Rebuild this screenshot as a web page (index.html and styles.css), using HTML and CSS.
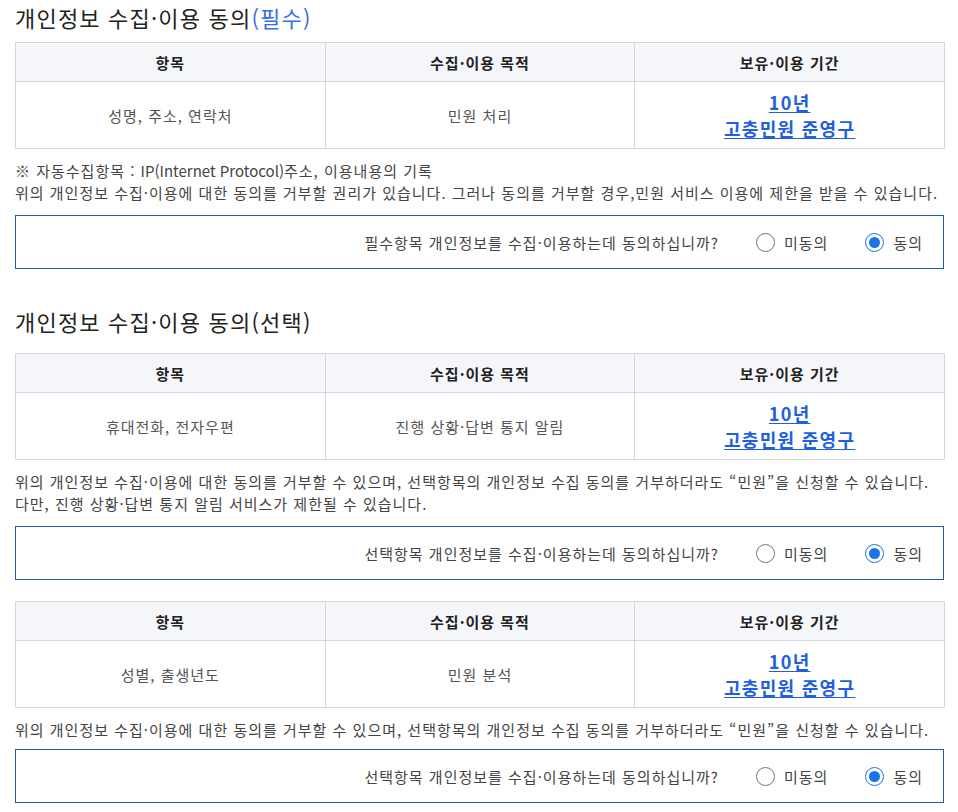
FILE: index.html
```html
<!DOCTYPE html>
<html lang="ko">
<head>
<meta charset="utf-8">
<link rel="stylesheet" href="styles.css">
</head>
<body>
<div class="page">
  <section class="sec sec-first">
    <h2 class="title">개인정보 수집·이용 동의<span class="req">(필수)</span></h2>
    <table class="tbl">
      <thead><tr><th>항목</th><th>수집·이용 목적</th><th>보유·이용 기간</th></tr></thead>
      <tbody><tr><td>성명, 주소, 연락처</td><td>민원 처리</td><td><a class="period" href="#">10년<br>고충민원 준영구</a></td></tr></tbody>
    </table>
    <p class="note">※ 자동수집항목 : <span class="latin">IP(Internet Protocol)</span>주소, 이용내용의 기록<br>위의 개인정보 수집·이용에 대한 동의를 거부할 권리가 있습니다. 그러나 동의를 거부할 경우,민원 서비스 이용에 제한을 받을 수 있습니다.</p>
    <div class="agree">
      <span class="q">필수항목 개인정보를 수집·이용하는데 동의하십니까?</span>
      <label class="opt"><input type="radio" name="a1"><span>미동의</span></label>
      <label class="opt"><input type="radio" name="a1" checked><span>동의</span></label>
    </div>
  </section>

  <section class="sec sec-second">
    <h2 class="title">개인정보 수집·이용 동의(선택)</h2>
    <table class="tbl">
      <thead><tr><th>항목</th><th>수집·이용 목적</th><th>보유·이용 기간</th></tr></thead>
      <tbody><tr><td>휴대전화, 전자우편</td><td>진행 상황·답변 통지 알림</td><td><a class="period" href="#">10년<br>고충민원 준영구</a></td></tr></tbody>
    </table>
    <p class="note">위의 개인정보 수집·이용에 대한 동의를 거부할 수 있으며, 선택항목의 개인정보 수집 동의를 거부하더라도 “민원”을 신청할 수 있습니다.<br>다만, 진행 상황·답변 통지 알림 서비스가 제한될 수 있습니다.</p>
    <div class="agree">
      <span class="q">선택항목 개인정보를 수집·이용하는데 동의하십니까?</span>
      <label class="opt"><input type="radio" name="a2"><span>미동의</span></label>
      <label class="opt"><input type="radio" name="a2" checked><span>동의</span></label>
    </div>

    <table class="tbl tbl-third">
      <thead><tr><th>항목</th><th>수집·이용 목적</th><th>보유·이용 기간</th></tr></thead>
      <tbody><tr><td>성별, 출생년도</td><td>민원 분석</td><td><a class="period" href="#">10년<br>고충민원 준영구</a></td></tr></tbody>
    </table>
    <p class="note">위의 개인정보 수집·이용에 대한 동의를 거부할 수 있으며, 선택항목의 개인정보 수집 동의를 거부하더라도 “민원”을 신청할 수 있습니다.</p>
    <div class="agree agree-last">
      <span class="q">선택항목 개인정보를 수집·이용하는데 동의하십니까?</span>
      <label class="opt"><input type="radio" name="a3"><span>미동의</span></label>
      <label class="opt"><input type="radio" name="a3" checked><span>동의</span></label>
    </div>
  </section>
</div>
</body>
</html>
```

FILE: styles.css
```css
* { box-sizing: border-box; }
html, body { margin: 0; padding: 0; background: #fff; }
body {
  font-family: "Noto Sans CJK KR", "Noto Sans", sans-serif;
  color: #333;
  font-size: 15px;
  letter-spacing: 1px;
}
.page {
  width: 958px;
  padding: 0 14px 0 15px;
}
.sec { margin: 0; }
.sec-second { margin-top: 35px; }
.title {
  margin: 0 0 8px;
  font-size: 22px;
  font-weight: 400;
  line-height: 34px;
  color: #222;
  letter-spacing: 1.2px;
}
.sec-second .title { margin-bottom: 15px; }
.req { color: #3a6fe0; }
.tbl {
  width: 930px;
  border-collapse: collapse;
  table-layout: fixed;
  border: 1px solid #d7d7db;
}
.tbl th, .tbl td {
  border: 1px solid #d7d7db;
  text-align: center;
  vertical-align: middle;
  padding: 0;
}
.tbl th {
  background: #f5f6fa;
  height: 39px;
  font-size: 15px;
  font-weight: 700;
  color: #222;
}
.tbl td {
  height: 67px;
  font-size: 15px;
  color: #555;
}
.period {
  display: inline-block;
  color: #1f5fe0;
  font-weight: 700;
  font-size: 18px;
  line-height: 26px;
  letter-spacing: 1.3px;
  text-decoration: underline;
  text-underline-offset: 2px;
}
.note {
  margin: 11px 0 0;
  font-size: 15px;
  line-height: 22px;
  color: #444;
}
.latin { letter-spacing: 0; }
.agree {
  margin-top: 11px;
  height: 54px;
  border: 1px solid #2057c4;
  display: flex;
  align-items: center;
  justify-content: flex-end;
  padding-right: 20px;
  font-size: 15px;
  color: #444;
}
.agree-last { margin-top: 8px; }
.q { margin-right: 37px; }
.opt {
  display: flex;
  align-items: center;
  gap: 9px;
}
.opt + .opt { margin-left: 37px; }
.opt input {
  appearance: none;
  -webkit-appearance: none;
  margin: 0;
  width: 19px;
  height: 19px;
  border: 1px solid #767676;
  border-radius: 50%;
  background: #fff;
  position: relative;
}
.opt input:checked {
  border-color: #1a73e8;
}
.opt input:checked::after {
  content: "";
  position: absolute;
  left: 3px;
  top: 3px;
  width: 11px;
  height: 11px;
  border-radius: 50%;
  background: #1a73e8;
}
.tbl-third { margin-top: 21px; }
```
